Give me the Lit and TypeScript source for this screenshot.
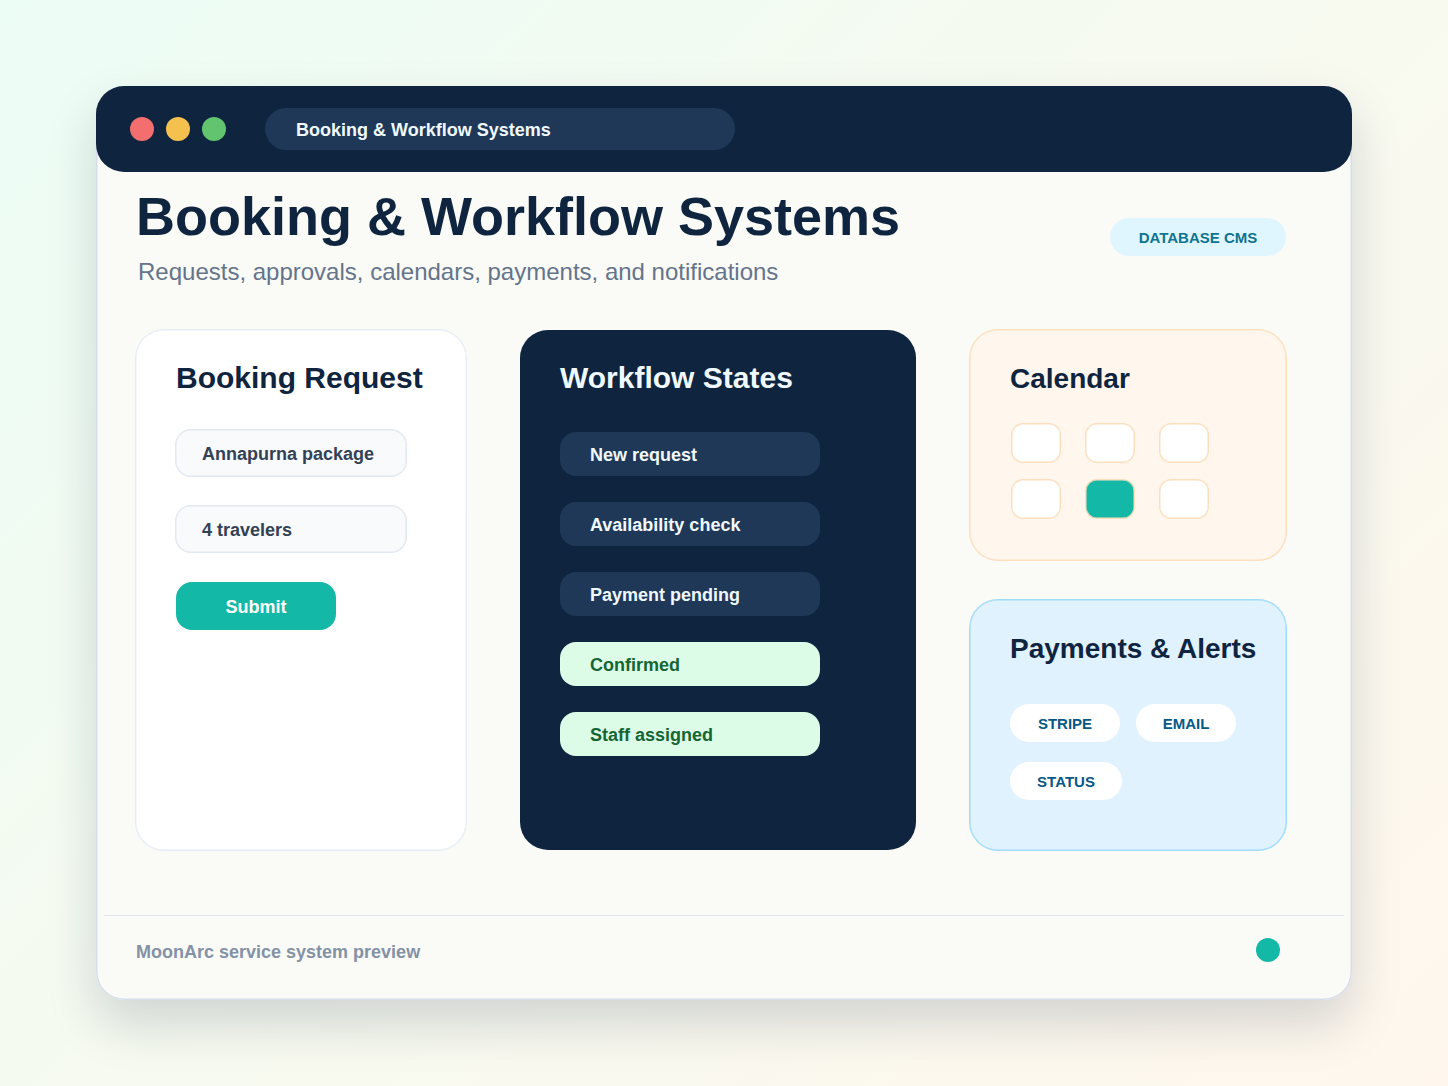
import { LitElement, html, css } from "lit";
import { customElement } from "lit/decorators.js";

@customElement("app-root")
export class AppRoot extends LitElement {
  static styles = css`
    :host { display: block; width: 1448px; height: 1086px; overflow: hidden; font-family: "Liberation Sans", Arial, sans-serif;
      background: linear-gradient(135deg, #ecfdf5 0%, #f7faf0 50%, #fff7ed 100%); box-sizing: border-box; padding: 86px 96px; }
    * { box-sizing: border-box; }
    .win { width: 1256px; height: 914px; border-radius: 28px; background: #fafaf6; box-shadow: inset 0 0 0 1.5px #d6deec, 0 24px 50px rgba(15,36,64,.17); display: flex; flex-direction: column; }
    .bar { height: 86px; background: #0f243e; border-radius: 28px; display: flex; align-items: center; padding: 0 34px; flex: none; }
    .dot { width: 24px; height: 24px; border-radius: 50%; margin-right: 12px; }
    .r { background: #f36f6f; } .y { background: #f5c14e; } .g { background: #62c46f; }
    .url { margin-left: 27px; width: 470px; height: 42px; border-radius: 21px; background: #1f3857; color: #f0f9ff; font-size: 18px; font-weight: 700; display: flex; align-items: center; padding: 2px 0 0 31px; }
    .head { display: flex; justify-content: space-between; padding: 0 66px 0 40px; height: 158px; flex: none; }
    h1 { margin: 11px 0 0 0; font-size: 54px; line-height: 66px; font-weight: 700; color: #0f243e; }
    .sub { margin: 9px 0 0 2px; font-size: 24px; line-height: 28px; color: #64748b; }
    .tag { margin-top: 46px; width: 176px; height: 38px; border-radius: 19px; background: #e0f6fe; color: #0e7490; font-size: 15px; font-weight: 700; display: flex; align-items: center; justify-content: center; }
    .grid { display: grid; grid-template-columns: 330px 396px 316px; gap: 54px; padding: 0 66px 0 40px; height: 520px; flex: none; }
    .card { border-radius: 28px; padding: 30px 40px; }
    h2 { margin: 0; font-size: 30px; line-height: 36px; font-weight: 700; white-space: nowrap; }
    .req { background: #fff; box-shadow: 0 0 0 1px #e6edf6, inset 0 0 0 .5px #e6edf6; color: #0f243e; }
    .req h2 { margin-bottom: 34px; }
    .field { width: 230px; height: 46px; border-radius: 15px; background: #f8fafc; box-shadow: 0 0 0 1px #e2e8f0, inset 0 0 0 .5px #e2e8f0; color: #334155; font-size: 18px; font-weight: 700; display: flex; align-items: center; padding: 2px 0 0 26px; margin-bottom: 30px; }
    .submit { width: 160px; height: 48px; border-radius: 16px; background: #14b8a6; color: #fff; font-size: 18px; font-weight: 700; display: flex; align-items: center; justify-content: center; padding-top: 2px; }
    .flow { background: #0f243e; color: #f0f9ff; }
    .flow h2 { margin-bottom: 36px; }
    .st { width: 260px; height: 44px; border-radius: 16px; background: #1f3857; color: #f0f9ff; font-size: 18px; font-weight: 700; display: flex; align-items: center; padding: 2px 0 0 30px; margin-bottom: 26px; }
    .st.ok { background: #dcfce7; color: #166534; }
    .side { display: flex; flex-direction: column; gap: 40px; }
    .cal, .pay { padding-top: 31px; }
    .cal { height: 230px; background: #fff6ed; box-shadow: 0 0 0 1px #fddfbc, inset 0 0 0 .5px #fddfbc; color: #0f243e; }
    .cal h2, .pay h2 { font-size: 28px; }
    .cal h2 { margin-bottom: 27px; }
    .days { display: grid; grid-template-columns: repeat(3, 48px); gap: 18px 26px; margin-left: 2px; }
    .day { height: 38px; border-radius: 11px; background: #fff; box-shadow: 0 0 0 1px #fddfbc, inset 0 0 0 .5px #fddfbc; }
    .day.on { background: #14b8a6; }
    .pay { height: 250px; background: #e0f2fe; box-shadow: 0 0 0 1px #9fdcf8, inset 0 0 0 .5px #9fdcf8; color: #0f243e; }
    .pay h2 { margin-bottom: 37px; }
    .chips { display: flex; flex-wrap: wrap; gap: 20px 16px; }
    .chip { height: 38px; border-radius: 19px; background: #fff; color: #075985; font-size: 15px; font-weight: 700; display: flex; align-items: center; justify-content: center; }
    .c1 { width: 110px; } .c2 { width: 100px; } .c3 { width: 112px; }
    .foot { margin: 65px 8px 0; flex: 1; border-top: 1px solid #e2e6ee; display: flex; justify-content: space-between; align-items: center; padding: 0 64px 17px 32px; color: #8492a6; font-size: 18px; font-weight: 700; }
    .ftext { padding-top: 6px; }
    .fdot { width: 24px; height: 24px; border-radius: 50%; background: #14b8a6; }
  `;
  render() {
    return html`<div class="win">
      <div class="bar"><span class="dot r"></span><span class="dot y"></span><span class="dot g"></span><div class="url">Booking &amp; Workflow Systems</div></div>
      <div class="head"><div><h1>Booking &amp; Workflow Systems</h1><div class="sub">Requests, approvals, calendars, payments, and notifications</div></div><div class="tag">DATABASE CMS</div></div>
      <div class="grid">
        <div class="card req"><h2>Booking Request</h2><div class="field">Annapurna package</div><div class="field">4 travelers</div><div class="submit">Submit</div></div>
        <div class="card flow"><h2>Workflow States</h2>
          ${["New request","Availability check","Payment pending"].map(s=>html`<div class="st">${s}</div>`)}
          ${["Confirmed","Staff assigned"].map(s=>html`<div class="st ok">${s}</div>`)}
        </div>
        <div class="side">
          <div class="card cal"><h2>Calendar</h2><div class="days">${[0,1,2,3,4,5].map(i=>html`<div class="day ${i===4?"on":""}"></div>`)}</div></div>
          <div class="card pay"><h2>Payments &amp; Alerts</h2><div class="chips"><div class="chip c1">STRIPE</div><div class="chip c2">EMAIL</div><div class="chip c3">STATUS</div></div></div>
        </div>
      </div>
      <div class="foot"><span class="ftext">MoonArc service system preview</span><span class="fdot"></span></div>
    </div>`;
  }
}
